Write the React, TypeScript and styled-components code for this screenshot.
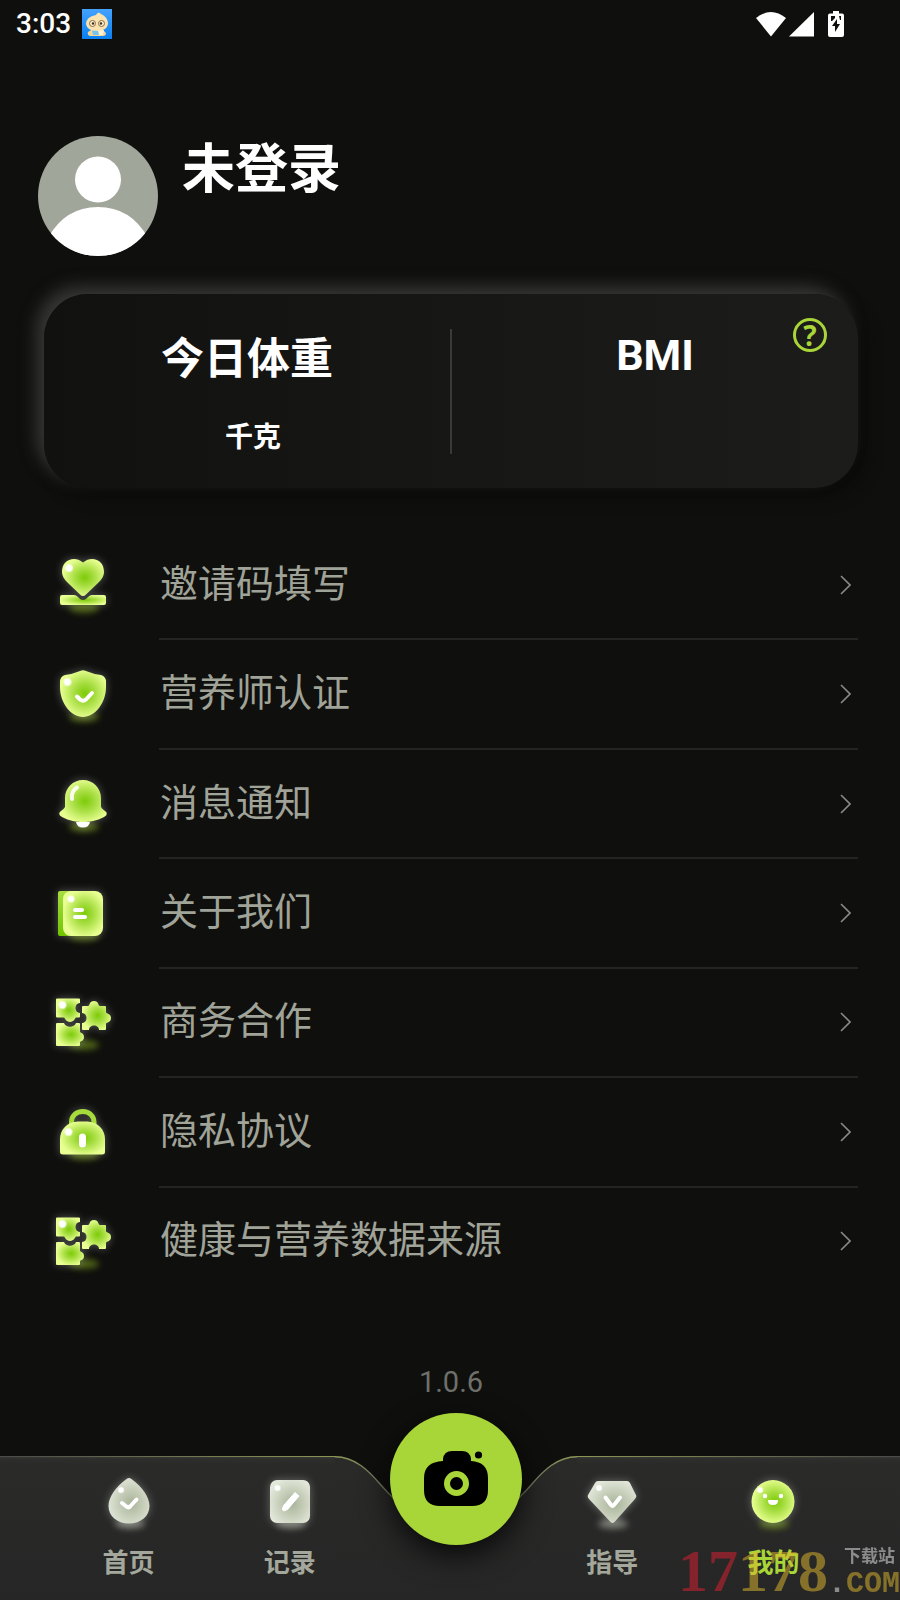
import { ReactNode } from "react";
import styled, { createGlobalStyle } from "styled-components";

const GlobalStyle = createGlobalStyle`
    * {
        box-sizing: border-box;
    }

    body {
        margin: 0;
        background: #0f0f0d;
        font-family: "Noto Sans CJK SC", Roboto, sans-serif;
    }
`;

const HeartIcon = () => (
    <>
        <path
            d="M28 4.5C31 2 34 1 37 1C44 1 49 6 49 14C49 18 47 21 43 25L31 36.500Q28 39.500 25 36.500L13 25C9 21 7 18 7 14C7 6 12 1 19 1C22 1 25 2 28 4.500Z"
            fill="url(#limeGlow)"
        />
        <path
            d="M7 37H19Q21 37 23 39L25 41Q28 43 31 41L33 39Q35 37 37 37H49Q51 37 51 39V45Q51 47 49 47H7Q5 47 5 45V39Q5 37 7 37Z"
            fill="url(#limeGlow)"
        />
        <circle cx="14" cy="10" r="4.500" fill="url(#shine)" />
    </>
);

const ShieldIcon = () => (
    <>
        <path
            d="M25 4Q28 2.500 31 4Q38 7 46 8Q51 9.500 51 15V20C51 36 40 50 28 50C16 50 5 36 5 20V15Q5 9.500 10 8Q18 7 25 4Z"
            fill="url(#limeGlow)"
        />
        <path d="M22 29.500L25 32.500Q28 35 31 32.500L37 26" className="mark" />
        <circle cx="12.500" cy="15" r="4.500" fill="url(#shine)" />
    </>
);

const BellIcon = () => (
    <>
        <path
            d="M28 3C38 3 46 11 46 21V30Q47 32 50 34Q54 37 49 40C42 44 34 45 28 45C22 45 14 44 7 40Q2 37 6 34Q9 32 10 30V21C10 11 18 3 28 3Z"
            fill="url(#limeGlow)"
        />
        <path d="M21 45H35Q34 50.500 28 50.500Q22 50.500 21 45Z" fill="#fff" />
        <path d="M17 22Q16 14 22 10.500" className="mark soft" />
    </>
);

const BookIcon = () => (
    <>
        <rect x="3" y="5" width="24" height="45" rx="2" fill="url(#limeSpine)" />
        <rect x="8" y="5" width="40" height="45" rx="8" fill="url(#limeGlow)" />
        <path d="M20 24H27M20 31H30" className="mark" />
        <circle cx="16" cy="13" r="4" fill="url(#shine)" />
    </>
);

const PuzzleIcon = () => (
    <>
        <path
            d="M2 3.500H24Q25 3.500 25 4.500V8C19 8 19 18 25 18V21.500Q25 22.500 24 22.500H21C20 23 19 27 15 27C11 27 10 23 9 22.500H2Q1 22.500 1 21.500V4.500Q1 3.500 2 3.500Z"
            fill="url(#limeGlow)"
        />
        <path
            d="M28 11H33C35 11 34 6 39 6C44 6 43 11 45 11H50Q51 11 51 12V17C51 19 56 18 56 23C56 28 51 27 51 29V34Q51 35 50 35H44C44 29 34 29 34 35H28Q27 35 27 34V28C33 28 33 18 27 18V12Q27 11 28 11Z"
            fill="url(#limeGlow)"
        />
        <path
            d="M2 28H9C11 33 19 33 21 28H24Q25 28 25 29V37C26 38 29 38 29 42C29 46 26 46 25 47V50Q25 51 24 51H2Q1 51 1 50V29Q1 28 2 28Z"
            fill="url(#limeGlow)"
        />
        <circle cx="7.500" cy="10" r="4.500" fill="url(#shine)" />
    </>
);

const LockIcon = () => (
    <>
        <path
            d="M16.500 20V17C16.500 11 21 6.500 28 6.500C34 6.500 39 11 39 17V20"
            fill="none"
            stroke="#a5dc3c"
            strokeWidth="5"
        />
        <path
            d="M23 16.500H32C43 16.500 50 25 50 34V47Q50 49.500 47 49.500H8Q5 49.500 5 47V34C5 25 12 16.500 23 16.500Z"
            fill="url(#limeGlow)"
        />
        <rect x="24" y="28.500" width="7" height="14" rx="3.500" fill="#fff" />
        <circle cx="13.500" cy="27" r="4.500" fill="url(#shine)" />
    </>
);

const HomeIcon = () => (
    <>
        <path
            d="M25.500 5Q28 3 30.500 5C42 13 48.500 24 48.500 32C48.500 42 40 49.500 28 49.500C16 49.500 7.500 42 7.500 32C7.500 24 14 13 25.500 5Z"
            fill="url(#greyGlow)"
        />
        <path d="M21 29L26 33Q28 34 29.500 32L35.500 25.500" className="mark" />
        <circle cx="20" cy="16" r="3.500" fill="url(#shine)" />
    </>
);

const RecordIcon = () => (
    <>
        <rect x="8" y="6" width="40" height="43" rx="7" fill="url(#greyGlow)" />
        <path d="M33 18.500L37 22L26 35Q22 38 20.500 36Q20 34 22 31Z" fill="#fff" stroke="#fff" strokeLinejoin="round" />
        <circle cx="15.500" cy="14" r="3.500" fill="url(#shine)" />
    </>
);

const GuideIcon = () => (
    <>
        <path
            d="M14 7H43Q45 7 46 9L52 21Q53 23 51 25L30.500 48Q28.500 50 26.500 48L5 25Q3 23 4 21L11 9Q12 7 14 7Z"
            fill="url(#greyGlow)"
        />
        <path d="M21.500 23.500L27 31Q28.500 33 30 31L36 23.500" className="mark" />
        <circle cx="15" cy="14" r="3.500" fill="url(#shine)" />
    </>
);

const MineIcon = () => (
    <>
        <circle cx="28" cy="27.500" r="21.500" fill="url(#limeGlow)" />
        <circle cx="20" cy="22" r="2.200" fill="#fff" />
        <circle cx="36" cy="22" r="2.200" fill="#fff" />
        <path d="M23 26H33Q33.500 31 28 31Q22.500 31 23 26Z" fill="#fff" />
        <circle cx="15" cy="16" r="3.500" fill="url(#shine)" />
    </>
);

// gradients shared by every glossy icon
const IconDefs = () => (
    <HiddenSvg aria-hidden="true">
        <defs>
            <radialGradient id="limeGlow" cx="0.540" cy="0.500" r="0.560">
                <stop offset="0" stopColor="#7ccb08" />
                <stop offset="0.400" stopColor="#a6dd40" />
                <stop offset="0.950" stopColor="#e8ff92" />
            </radialGradient>
            <linearGradient id="limeSpine" x1="0" y1="0" x2="0" y2="1">
                <stop offset="0" stopColor="#a6de40" />
                <stop offset="1" stopColor="#70c400" />
            </linearGradient>
            <radialGradient id="greyGlow" cx="0.550" cy="0.550" r="0.600">
                <stop offset="0" stopColor="#a9b398" />
                <stop offset="1" stopColor="#e2e8da" />
            </radialGradient>
            <radialGradient id="shine">
                <stop offset="0.600" stopColor="#fff" />
                <stop offset="1" stopColor="#fff" stopOpacity="0.200" />
            </radialGradient>
            <filter id="shadowBlur" x="-50%" y="-150%" width="200%" height="400%">
                <feGaussianBlur stdDeviation="3" />
            </filter>
        </defs>
    </HiddenSvg>
);

const GlossyIcon = ({ children, shadow = "#76981c" }: { children: ReactNode; shadow?: string }) => (
    <GlossySvg viewBox="0 0 56 56" aria-hidden="true">
        <ellipse cx="29" cy="50" rx="15" ry="5" fill={shadow} opacity="0.600" filter="url(#shadowBlur)" />
        <g className="body">{children}</g>
    </GlossySvg>
);

const menuItems = [
    { label: "邀请码填写", icon: <HeartIcon /> },
    { label: "营养师认证", icon: <ShieldIcon /> },
    { label: "消息通知", icon: <BellIcon /> },
    { label: "关于我们", icon: <BookIcon /> },
    { label: "商务合作", icon: <PuzzleIcon /> },
    { label: "隐私协议", icon: <LockIcon /> },
    { label: "健康与营养数据来源", icon: <PuzzleIcon /> },
];

const App = () => {
    return (
        <Page>
            <GlobalStyle />
            <IconDefs />
            <StatusBar>
                <Clock>3:03</Clock>
                <svg width="30" height="30" viewBox="0 0 30 30" aria-hidden="true">
                    <defs>
                        <linearGradient id="appBlue" x1="0" y1="0" x2="0" y2="1">
                            <stop offset="0" stopColor="#44a2ff" />
                            <stop offset="1" stopColor="#0a80f0" />
                        </linearGradient>
                    </defs>
                    <rect width="30" height="30" fill="url(#appBlue)" />
                    <path d="M9 21H21L24 24Q24 27 21 27H8Q5 26 6 23Z" fill="#f5d69a" />
                    <path d="M10 21H19V26H11Z" fill="#74c4ee" />
                    <path d="M16 21H22L21 26H17Z" fill="#fff3d6" />
                    <path d="M14 6Q16 2 19 5Q26 8 26 15Q25 22 15 22Q5 22 4 15Q4 8 14 6Z" fill="#fbe3b0" />
                    <circle cx="10.500" cy="14.500" r="3" fill="#fff0cf" stroke="#8a6b45" />
                    <circle cx="19.500" cy="14.500" r="3" fill="#fff0cf" stroke="#8a6b45" />
                    <circle cx="11" cy="14.500" r="1.200" fill="#3d2b1c" />
                    <circle cx="19" cy="14.500" r="1.200" fill="#3d2b1c" />
                </svg>
                <SystemIcons>
                    <svg width="30" height="26" viewBox="0 0 30 26" fill="#fff" aria-hidden="true">
                        <path d="M0 7Q15 -5 30 7L15 25.500Z" />
                    </svg>
                    <svg width="25" height="26" viewBox="0 0 25 26" fill="#fff" aria-hidden="true">
                        <path d="M25 1V25.500H0Z" />
                    </svg>
                    <BatterySvg width="16" height="26" viewBox="0 0 16 26" aria-hidden="true">
                        <path
                            d="M5 0H11V2.500H14Q16 2.500 16 4.500V24Q16 26 14 26H2Q0 26 0 24V4.500Q0 2.500 2 2.500H5Z"
                            fill="#fff"
                        />
                        <path d="M3 5H7V7L4 10H3ZM11 5H13V9H12Z" fill="#0f0f0d" />
                        <path d="M9 8V13H12L7 21V15H4Z" fill="#0f0f0d" />
                    </BatterySvg>
                </SystemIcons>
            </StatusBar>

            <Main>
                <Profile>
                    <svg width="120" height="120" viewBox="0 0 120 120" role="img" aria-label="头像">
                        <clipPath id="avatarClip">
                            <circle cx="60" cy="60" r="60" />
                        </clipPath>
                        <g clipPath="url(#avatarClip)">
                            <rect width="120" height="120" fill="#a1a69b" />
                            <circle cx="60" cy="43.500" r="23" fill="#fff" />
                            <path d="M10 102Q27 71 60 71Q93 71 110 102V120H10Z" fill="#fff" />
                        </g>
                    </svg>
                    <UserName>未登录</UserName>
                </Profile>

                <StatsCard>
                    <Stat>
                        <StatTitle>今日体重</StatTitle>
                        <StatUnit>千克</StatUnit>
                    </Stat>
                    <StatDivider />
                    <Stat>
                        <StatTitle $latin>BMI</StatTitle>
                    </Stat>
                    <HelpBtn type="button" aria-label="BMI 说明">
                        ?
                    </HelpBtn>
                </StatsCard>

                <MenuList>
                    {menuItems.map(({ label, icon }) => (
                        <li key={label}>
                            <MenuLink href="#">
                                <GlossyIcon>{icon}</GlossyIcon>
                                <MenuBody>
                                    <span>{label}</span>
                                    <svg width="12" height="20" viewBox="0 0 12 20" fill="none" aria-hidden="true">
                                        <path d="M2 1L11 10L2 19" stroke="#888a84" strokeWidth="1.600" />
                                    </svg>
                                </MenuBody>
                            </MenuLink>
                        </li>
                    ))}
                </MenuList>
                <Version>1.0.6</Version>
            </Main>

            <NavBar>
                <NavBackdrop>
                    <NavPanel $side="left" />
                    <Notch>
                        <svg width="242" height="144" viewBox="0 0 242 144" aria-hidden="true">
                            <defs>
                                <linearGradient id="notchFill" x1="0" y1="0" x2="0" y2="1">
                                    <stop offset="0" stopColor="#2a2a29" />
                                    <stop offset="1" stopColor="#262626" />
                                </linearGradient>
                                <linearGradient id="notchLine">
                                    <stop offset="0" stopColor="#8b9655" />
                                    <stop offset="0.250" stopColor="#6d705c" />
                                    <stop offset="0.750" stopColor="#6d705c" />
                                    <stop offset="1" stopColor="#8b9655" />
                                </linearGradient>
                            </defs>
                            <path
                                d="M0 0C20 0 34 15 45 28C64 50 88 70 121 70C154 70 178 50 197 28C208 15 222 0 242 0V144H0Z"
                                fill="url(#notchFill)"
                            />
                            <path
                                d="M0 0.700C20 0.700 34 15 45 28C64 50 88 70 121 70C154 70 178 50 197 28C208 15 222 0.700 242 0.700"
                                fill="none"
                                stroke="url(#notchLine)"
                                strokeWidth="1.400"
                            />
                        </svg>
                        <CameraBtn type="button" aria-label="拍照">
                            <svg width="64" height="56" viewBox="0 0 64 56" aria-hidden="true">
                                <path d="M19 10V8Q20 0 28 0H38Q46 0 47 8V10Q64 11 64 27V39Q64 55 48 55H16Q0 55 0 39V27Q0 11 19 10Z" />
                                <circle cx="32.500" cy="32.500" r="9.500" fill="none" stroke="#a8d538" strokeWidth="6" />
                                <circle cx="54.500" cy="4" r="3.600" />
                            </svg>
                        </CameraBtn>
                    </Notch>
                    <NavPanel $side="right" />
                </NavBackdrop>
                <NavItems>
                    <NavLink href="#">
                        <GlossyIcon shadow="#a4a99c">
                            <HomeIcon />
                        </GlossyIcon>
                        首页
                    </NavLink>
                    <NavLink href="#">
                        <GlossyIcon shadow="#a4a99c">
                            <RecordIcon />
                        </GlossyIcon>
                        记录
                    </NavLink>
                    <span />
                    <NavLink href="#">
                        <GlossyIcon shadow="#a4a99c">
                            <GuideIcon />
                        </GlossyIcon>
                        指导
                    </NavLink>
                    <NavLink href="#" $active aria-current="page">
                        <GlossyIcon>
                            <MineIcon />
                        </GlossyIcon>
                        我的
                    </NavLink>
                </NavItems>
                <Watermark>
                    <WatermarkDigits>
                        <em>17</em>178
                    </WatermarkDigits>
                    <WatermarkSide>
                        <small>下载站</small>
                        <span>
                            <i>.</i>COM
                        </span>
                    </WatermarkSide>
                </Watermark>
            </NavBar>
        </Page>
    );
};

export default App;

const Page = styled.div`
    display: flex;
    flex-direction: column;
    min-height: 100vh;
    background: #0f0f0d;
    color: white;
`;

const HiddenSvg = styled.svg`
    position: absolute;
    width: 0;
    height: 0;
`;

const GlossySvg = styled.svg`
    width: 56px;
    height: 56px;
    flex-shrink: 0;
    overflow: visible;

    .body {
        filter: drop-shadow(0 0 4px rgba(255, 255, 255, 0.3));
    }

    .mark {
        fill: none;
        stroke: white;
        stroke-width: 4px;
        stroke-linecap: round;
        stroke-linejoin: round;
    }

    .soft {
        opacity: 0.9;
    }
`;

const StatusBar = styled.header`
    display: flex;
    align-items: center;
    gap: 11px;
    height: 48px;
    padding: 0 56px 0 16px;
`;

const Clock = styled.time`
    font-family: Roboto, sans-serif;
    font-size: 28px;
    line-height: 36px;
    font-weight: 500;
`;

const SystemIcons = styled.div`
    display: flex;
    align-items: center;
    gap: 3px;
    margin-left: auto;
`;

const BatterySvg = styled.svg`
    margin-left: 11px;
`;

const Main = styled.main`
    display: flex;
    flex-direction: column;
    flex: 1;
    padding: 88px 42px 56px 44px;
`;

const Profile = styled.section`
    display: flex;
    gap: 24px;
    margin-left: -6px;
`;

const UserName = styled.h1`
    margin: 0;
    font-size: 53px;
    line-height: 58px;
    font-weight: 700;
`;

const StatsCard = styled.section`
    position: relative;
    display: flex;
    align-items: stretch;
    min-height: 194px;
    margin-top: 38px;
    padding: 35px 0 34px;
    border-radius: 44px;
    background: linear-gradient(90deg, #111110, #1c1c1b);
    box-shadow: -8px -8px 16px #363635, 8px 8px 16px #0b0b0a;
`;

const Stat = styled.div`
    display: flex;
    flex: 1;
    flex-direction: column;
    align-items: center;
    gap: 35px;
`;

const StatTitle = styled.h2<{ $latin?: boolean }>`
    margin: 0;
    font-family: ${({ $latin }) => ($latin ? "Roboto" : '"Noto Sans CJK SC"')}, sans-serif;
    font-size: 43px;
    line-height: 52px;
    font-weight: 700;
`;

const StatUnit = styled.span`
    padding-left: 12px;
    font-size: 28px;
    line-height: 38px;
    font-weight: 700;
`;

const StatDivider = styled.div`
    width: 2px;
    background: #3a3a38;
`;

const HelpBtn = styled.button`
    position: absolute;
    top: 24px;
    right: 31px;
    display: flex;
    align-items: center;
    justify-content: center;
    width: 34px;
    height: 34px;
    padding: 0;
    border: 3px solid #a8d538;
    border-radius: 50%;
    background: none;
    color: #a8d538;
    font-family: "Noto Sans", sans-serif;
    font-size: 28px;
    line-height: 28px;
    font-weight: 700;
    cursor: pointer;
`;

const MenuList = styled.ul`
    display: grid;
    grid-auto-rows: 1fr;
    min-height: 766px;
    margin: 43px 0 0;
    padding: 0;
    list-style: none;

    li:last-child a > div {
        border-bottom-color: transparent;
    }
`;

const MenuLink = styled.a`
    display: flex;
    align-items: center;
    gap: 48px;
    height: 100%;
    padding-left: 11px;
    color: #a0a398;
    text-decoration: none;
`;

const MenuBody = styled.div`
    display: flex;
    flex: 1;
    align-items: center;
    align-self: stretch;
    justify-content: space-between;
    padding-right: 7px;
    border-bottom: 2px solid #242423;
    font-size: 38px;
    line-height: 56px;

    span {
        padding: 0 0 8px 1px;
    }
`;

const Version = styled.p`
    margin: auto 0 0;
    color: #6e706b;
    font-family: Roboto, sans-serif;
    font-size: 29px;
    line-height: 36px;
    text-align: center;
`;

const NavBar = styled.nav`
    position: relative;
`;

const NavBackdrop = styled.div`
    position: absolute;
    inset: 0;
    display: grid;
    grid-template-columns: 335fr 242px 323fr;
`;

const NavPanel = styled.div<{ $side: "left" | "right" }>`
    height: 144px;
    background:
        linear-gradient(to ${({ $side }) => $side}, #8b9655, #6f7650 45%, #4a4a49) top / 100% 1px no-repeat,
        linear-gradient(#3c3d36, #2e2e2d 3px, #2a2a29 8px, #262626);
`;

const Notch = styled.div`
    position: relative;
    height: 144px;
`;

const CameraBtn = styled.button`
    position: absolute;
    top: -43px;
    left: 50%;
    display: flex;
    align-items: center;
    justify-content: center;
    width: 132px;
    height: 132px;
    margin-left: -66px;
    padding: 0;
    border: none;
    border-radius: 50%;
    background: #a8d538;
    box-shadow: 0 10px 30px rgba(0, 0, 0, 0.8);
    cursor: pointer;
`;

const NavItems = styled.div`
    position: relative;
    display: grid;
    grid-template-columns: repeat(5, 1fr);
    height: 144px;
    padding: 18px 46px 0 48px;
    pointer-events: none;
`;

const NavLink = styled.a<{ $active?: boolean }>`
    display: flex;
    flex-direction: column;
    align-items: center;
    gap: 13px;
    color: ${({ $active }) => ($active ? "#a8d538" : "#a4a79b")};
    font-size: 26px;
    line-height: 36px;
    font-weight: 700;
    text-decoration: none;
    pointer-events: auto;
`;

const Watermark = styled.div`
    position: absolute;
    right: 0;
    bottom: 0;
    display: flex;
    align-items: flex-end;
    opacity: 0.5;
    pointer-events: none;
`;

const WatermarkDigits = styled.span`
    color: #e3bb2e;
    font-family: "Liberation Serif", serif;
    font-size: 60px;
    line-height: 58px;
    font-weight: 700;

    em {
        color: #e12131;
        font-style: normal;
    }
`;

const WatermarkSide = styled.span`
    display: flex;
    flex-direction: column;
    align-items: flex-end;
    color: #e3bb2e;
    font-family: "Liberation Mono", monospace;
    font-size: 30px;
    line-height: 32px;
    font-weight: 700;

    small {
        padding-right: 5px;
        color: #f0f0f0;
        font-family: "Noto Sans CJK SC", sans-serif;
        font-size: 17px;
        line-height: 26px;
    }

    i {
        color: #f0f0f0;
        font-style: normal;
    }
`;
